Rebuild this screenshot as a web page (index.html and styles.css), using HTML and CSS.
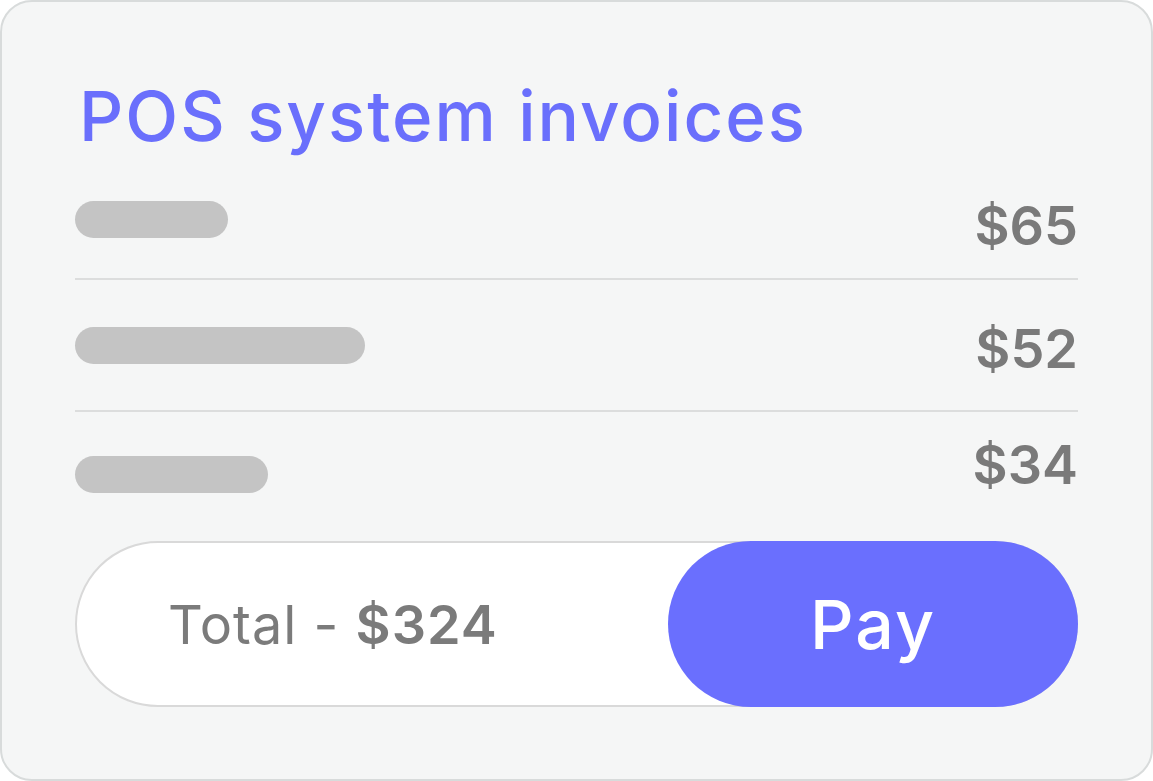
FILE: index.html
```html
<!DOCTYPE html>
<html>
<head>
<meta charset="utf-8">
<link rel="stylesheet" href="styles.css">
</head>
<body>
<div class="card">
  <h1 class="title">POS system invoices</h1>
  <div class="row row-1">
    <span class="bar" style="width:153px"></span>
    <span class="price">$65</span>
  </div>
  <div class="row row-2">
    <span class="bar" style="width:290px"></span>
    <span class="price">$52</span>
  </div>
  <div class="row row-3">
    <span class="bar" style="width:193px"></span>
    <span class="price">$34</span>
  </div>
  <div class="pill">
    <div class="total">Total - <strong>$324</strong></div>
    <button class="pay">Pay</button>
  </div>
</div>
</body>
</html>
```

FILE: styles.css
```css
html, body {
  margin: 0;
  padding: 0;
  background: #ffffff;
}

body {
  font-family: Inter, "Noto Sans", sans-serif;
}

.card {
  box-sizing: border-box;
  width: 1153px;
  height: 781px;
  background: #f5f6f6;
  border: 2px solid #d8dbdb;
  border-radius: 32px;
  padding: 0 73px 0 73px;
  display: flex;
  flex-direction: column;
}

.title {
  margin: 74px 0 4px 4px;
  font-size: 69px;
  line-height: 80px;
  font-weight: 500;
  color: #6a6ffc;
  letter-spacing: 2px;
}

.row {
  display: flex;
  align-items: center;
  justify-content: space-between;
  border-bottom: 2px solid #dcdddd;
}

.row-1 { height: 118px; }
.row-2 { height: 130px; }
.row-3 { height: 124px; border-bottom: none; }

.bar {
  display: block;
  height: 37px;
  border-radius: 19px;
  background: #c4c4c4;
}

.price {
  font-size: 54px;
  font-weight: 600;
  color: #7a7a7a;
  line-height: 1;
}

.row-1 .price { margin-top: 14px; }
.row-2 .price { margin-top: 8px; }
.row-3 .price { margin-top: -18px; }

.pill {
  margin-top: 5px;
  box-sizing: border-box;
  height: 166px;
  background: #ffffff;
  border: 2px solid #d9d9d9;
  border-radius: 83px;
  display: flex;
  align-items: center;
  justify-content: space-between;
}

.total {
  margin-left: 91px;
  font-size: 54px;
  font-weight: 400;
  color: #7b7b7b;
  letter-spacing: 1px;
}

.total strong {
  font-weight: 600;
}

.pay {
  margin: -2px -2px -2px 0;
  width: 410px;
  height: 166px;
  border: none;
  border-radius: 83px;
  background: #6a6ffe;
  color: #ffffff;
  font-family: Inter, "Noto Sans", sans-serif;
  font-size: 68px;
  font-weight: 500;
  letter-spacing: 2px;
  padding: 0;
}
```
